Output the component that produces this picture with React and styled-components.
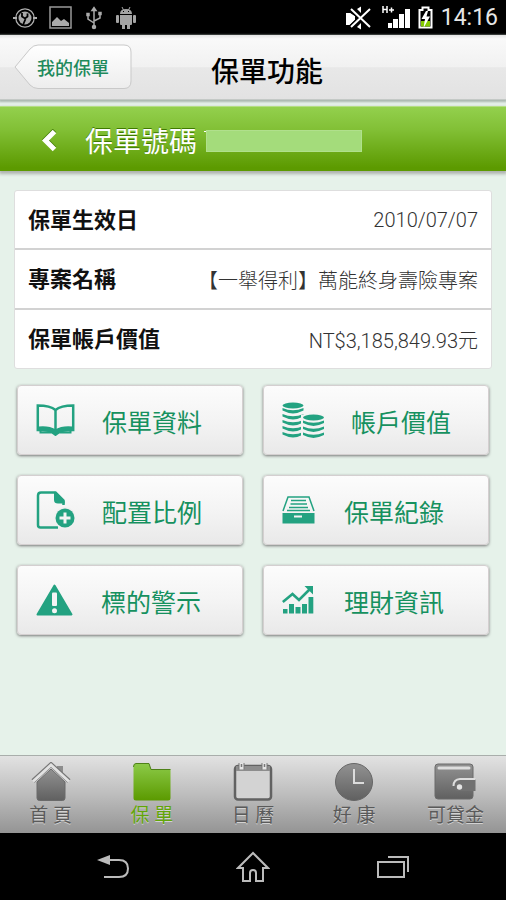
import styled, { createGlobalStyle } from 'styled-components';

const GlobalStyle = createGlobalStyle`
  * {
    box-sizing: border-box;
  }
  body {
    margin: 0;
    background-color: #000;
    font-family: Roboto, 'Noto Sans CJK TC', sans-serif;
  }
  button {
    margin: 0;
    padding: 0;
    border: 0;
    background: none;
    font-family: inherit;
    cursor: pointer;
  }
  svg {
    display: block;
    flex: none;
  }
`;

const Page = styled.div`
  display: flex;
  flex-direction: column;
  min-height: 100vh;
  background-color: #e6f2ea;
`;

// 狀態列
const StatusBar = styled.div`
  display: flex;
  align-items: center;
  justify-content: space-between;
  height: 35px;
  padding: 0 8px 0 13px;
  background-color: #000;
`;

const StatusGroup = styled.div`
  display: flex;
  align-items: center;
  gap: ${({ gap }) => gap}px;
`;

const Clock = styled.span`
  color: #e6e6e6;
  font-size: 23px;
  line-height: 35px;
`;

// 標題列
const Header = styled.header`
  display: grid;
  grid-template-columns: 118px 1fr 104px;
  align-items: center;
  height: 65px;
  padding-left: 14px;
  border-bottom: 1px solid #c4c9c6;
  background: linear-gradient(#e4e4e4, #f9f9f9 6%, #f1f1f1 50%, #e8e8e8 51%, #e2e2e2);
  box-shadow: 0 1px 2px 1px #aab8b0;
`;

const BackButton = styled.button`
  position: relative;
  height: 46px;
  padding: 4px 0 0 23px;
  color: #1f8a5c;
  font-size: 18px;
  font-weight: 500;
  line-height: 42px;
  text-align: left;

  svg {
    position: absolute;
    top: 0;
    left: 0;
  }
  span {
    position: relative;
  }
`;

const PageTitle = styled.h1`
  margin: 0;
  padding-top: 12px;
  color: #000;
  font-size: 28px;
  font-weight: 500;
  line-height: 40px;
  text-align: center;
`;

const PolicyBar = styled.div`
  display: flex;
  align-items: center;
  height: 65px;
  margin-top: 6px;
  padding: 4px 0 0 40px;
  border-top: 1px solid #b4de83;
  background: linear-gradient(#93d04d, #82c036 35%, #5c9a00 95%, #5c9a00);
  box-shadow: 0 2px 3px 1px #aeb3ae;
`;

const PrevButton = styled.button`
  width: 45px;
  height: 40px;
`;

const PolicyTitle = styled.h2`
  margin: 0;
  padding-top: 4px;
  color: #fff;
  font-size: 28px;
  font-weight: 400;
  line-height: 40px;
  text-shadow: 0 -1px 0 #3f7a00;
`;

const Mask = styled.span`
  position: relative;
  width: 156px;
  height: 22px;
  margin-left: 9px;
  border: 1px solid #b0e08c;
  background-color: #a4dc7b;

  &::before {
    content: '';
    position: absolute;
    top: 0;
    left: -3px;
    width: 2px;
    height: 1px;
    background-color: #fff;
  }
`;

const Main = styled.main`
  flex: 1;
  padding: 19px 14px;
`;

// 保單資訊
const InfoList = styled.dl`
  margin: 0;
  border: 1px solid #dedede;
  border-radius: 3px;
  background-color: #fff;
`;

const InfoRow = styled.div`
  display: flex;
  align-items: center;
  justify-content: space-between;
  height: 57px;
  padding: 0 13px;

  & + & {
    height: 60px;
    border-top: 2px solid #d2d2d2;
  }
  dt {
    padding-bottom: 4px;
    color: #111;
    font-size: 22px;
    font-weight: 700;
  }
  dd {
    margin: 0;
    color: #333;
    font-size: 20px;
    font-weight: 300;
  }
`;

// 功能按鈕
const MenuGrid = styled.div`
  display: grid;
  grid-template-columns: 1fr 1fr;
  gap: 20px;
  padding: 16px 3px 0;
`;

const MenuButton = styled.button`
  display: flex;
  align-items: center;
  gap: 27px;
  height: 70px;
  padding-left: 18px;
  border: 1px solid #d4cfd0;
  border-radius: 4px;
  background: linear-gradient(#fcfcfc, #f4f4f4 50%, #e9e9e9);
  box-shadow: 0 1px 3px #777;
  color: #16915f;
  font-size: 25px;
  line-height: 36px;

  span {
    padding-top: 8px;
  }
`;

// 下方選單
const TabBar = styled.nav`
  display: grid;
  grid-template-columns: repeat(5, 1fr);
  height: 78px;
  border-top: 1px solid #a9aeab;
  background: linear-gradient(#e2e2e2, #bdbdbd 50%, #949494);
`;

const Tab = styled.a`
  display: flex;
  flex-direction: column;
  align-items: center;
  padding-top: 6px;
  color: ${({ $active }) => ($active ? '#62a508' : '#5a5a5a')};
  font-size: 19px;
  line-height: 28px;
  text-decoration: none;
  text-shadow: 0 1px 0 #d2d2d2;
`;

const NavBar = styled.div`
  display: grid;
  grid-template-columns: repeat(3, 140px);
  justify-content: center;
  height: 67px;
  background-color: #000;
`;

const NavButton = styled.button`
  display: flex;
  align-items: center;
  justify-content: center;
`;

const GREEN = '#23a281';

const BookIcon = () => (
  <svg width="39" height="32" viewBox="0 0 39 32" fill="none" stroke={GREEN}>
    <path d="M19.500 6C16 3 9 1.500 1.800 1.500V26c6 0 13 .5 17.700 3.500C24 26.500 31 26 37.200 26V1.500C30 1.500 23 3 19.500 6zV29" strokeWidth="2.500" />
    <path d="M1 26H4.500V28.500H16L19.500 31L23 28.500H34.500V26H38" strokeWidth="2" />
    <path d="M3 24.500c7-.8 12 .5 16.500 3C24 25 29 23.700 36 24.500" strokeWidth="4" />
  </svg>
);

const CoinsIcon = () => (
  <svg width="42" height="36" viewBox="0 0 42 36" fill={GREEN}>
    <ellipse cx="11" cy="3.500" rx="10.500" ry="2.900" />
    {[6, 12, 18, 24, 30].map(y => (
      <path key={y} d={`M.5 ${y}q10.500 4.500 21 0v2.600q-10.500 5.600-21 0z`} />
    ))}
    <path d="M19 12.500h23v24H19z" fill="#f3f3f3" />
    <ellipse cx="31.500" cy="15.500" rx="10.500" ry="2.900" />
    {[18.500, 24.500, 30.500].map(y => (
      <path key={y} d={`M21 ${y}q10.500 4.500 21 0v2.600q-10.500 5.600-21 0z`} />
    ))}
  </svg>
);

const FileIcon = () => (
  <svg width="39" height="38" viewBox="0 0 39 38">
    <path d="M27.500 14V9.500L19.500 1.500H5Q2 1.500 2 4.500V34Q2 36.500 4.500 36.500H22" fill="none" stroke={GREEN} strokeWidth="2.500" />
    <path d="M18 .5L28.700 10.500V12.500H22Q18 12.500 18 9z" fill={GREEN} />
    <circle cx="29" cy="27" r="11" fill="#f0f0f0" />
    <circle cx="29" cy="27" r="9.500" fill={GREEN} />
    <path d="M29 21.500V32.500M23.500 27H34.500" stroke="#f4f4f4" strokeWidth="3" />
  </svg>
);

const DrawerIcon = () => (
  <svg width="35" height="28" viewBox="0 0 35 28" fill="none" stroke={GREEN}>
    <path d="M1 15L6 1H27L32 15" strokeWidth="1.500" />
    <path d="M9 4.500H24M8.500 8H25M7 11.500H26M5 14.500H28" strokeWidth="1.700" />
    <path d="M.5 17H32.500V27.500H.5z" fill={GREEN} stroke="none" />
    <path d="M12 20.500H20" stroke="#f4f4f4" strokeWidth="2" />
  </svg>
);

const WarningIcon = () => (
  <svg width="38" height="32" viewBox="0 0 38 32">
    <path d="M18.500 1.500L35.500 30.500H1.500z" fill={GREEN} stroke={GREEN} strokeWidth="2" strokeLinejoin="round" />
    <rect x="16" y="8.500" width="5" height="13.500" rx="1" fill="#f4f4f4" />
    <circle cx="18.500" cy="26.800" r="2.500" fill="#f4f4f4" />
  </svg>
);

const ChartIcon = () => (
  <svg width="35" height="28" viewBox="0 0 35 28">
    <path d="M1 23h4.500v4.500H1zM7 18h5v9.500H7zM13.500 21h5v6.500h-5zM20 18h5v9.500h-5zM26.500 11h4.800v16.500h-4.800z" fill={GREEN} />
    <path d="M.8 16L10.500 8L17 14L27.500 3.500" fill="none" stroke={GREEN} strokeWidth="2.600" />
    <path d="M22.500 0H31V8.500z" fill={GREEN} />
  </svg>
);

const TabDefs = () => (
  <defs>
    <linearGradient id="gray" x1="0" y1="0" x2="0" y2="1">
      <stop offset="0" stopColor="#929292" />
      <stop offset="1" stopColor="#606060" />
    </linearGradient>
    <linearGradient id="green" x1="0" y1="0" x2="0" y2="1">
      <stop offset="0" stopColor="#8cca48" />
      <stop offset="1" stopColor="#5b9a00" />
    </linearGradient>
  </defs>
);

const HomeIcon = () => (
  <svg width="40" height="40" viewBox="0 0 40 40">
    <TabDefs />
    <path d="M26 4H32V15L26 10z" fill="#8d8d8d" />
    <path d="M6 20L20 7L34 20V36Q34 38.500 31.500 38.500H8.500Q6 38.500 6 36z" fill="url(#gray)" stroke="#6a6a6a" />
    <path d="M2 19L20 2.500L38 19" fill="none" stroke="#777" strokeWidth="4.500" />
    <path d="M2 19.500L20 3L38 19.500" fill="none" stroke="#e2e2e2" strokeWidth="3" />
  </svg>
);

const FolderIcon = () => (
  <svg width="40" height="40" viewBox="0 0 40 40">
    <path d="M1.500 5Q1.500 1.500 4 1.500H17L19 7.500H38.500V36Q38.500 38.500 36 38.500H4Q1.500 38.500 1.500 36z" fill="url(#green)" />
    <path d="M1.500 5Q1.500 1.500 4 1.500H17L19 7.500H38.500" fill="none" stroke="#4e8118" />
  </svg>
);

const CalendarIcon = () => (
  <svg width="40" height="40" viewBox="0 0 40 40">
    <rect x="2" y="4" width="36" height="33.500" rx="3" fill="#d3d3d3" stroke="#626262" strokeWidth="2.500" />
    <path d="M3 4H37V9H3z" fill="#8d8d8d" />
    <path d="M8.500 1V7.500M31.500 1V7.500" stroke="#777" strokeWidth="6" />
    <path d="M8.500 1V7.500M31.500 1V7.500" stroke="#e5e5e5" strokeWidth="4" />
    <path d="M8.500 2V5M31.500 2V5" stroke="#777" strokeWidth="1.500" />
  </svg>
);

const ClockIcon = () => (
  <svg width="40" height="40" viewBox="0 0 40 40">
    <circle cx="20" cy="20" r="18.500" fill="url(#gray)" stroke="#666" />
    <path d="M20 7V21H30" fill="none" stroke="#dcdcdc" strokeWidth="2" />
  </svg>
);

const WalletIcon = () => (
  <svg width="42" height="40" viewBox="0 0 42 40">
    <rect x="1" y="2" width="38" height="35" rx="3" fill="url(#gray)" stroke="#6b6b6b" />
    <path d="M5 6H35" stroke="#dedede" strokeWidth="3" strokeLinecap="round" />
    <path d="M41.500 17H26Q19.500 18 19.500 23Q19.500 29 24 29H41.500z" fill="#717171" />
    <path d="M41.500 17H26Q19.500 17.500 19.500 24" fill="none" stroke="#dedede" strokeWidth="2" />
    <circle cx="25.500" cy="25" r="2.700" fill="#e5e5e5" />
  </svg>
);

const StatusIcons = () => (
  <StatusGroup gap={12}>
    <svg width="24" height="22" viewBox="0 0 24 22" fill="none" stroke="#b0b0b0">
      <circle cx="12" cy="11" r="9.200" strokeWidth="1.200" />
      <path d="M0 11H4M20 11H24" strokeWidth="2" />
      <circle cx="12" cy="11" r="6.500" fill="#a8a8a8" stroke="none" />
      <path d="M10 18L12.500 12M9 6V9.500L12 11.500L14.500 9.500V6.500" stroke="#000" strokeWidth="1.800" />
    </svg>
    <svg width="23" height="23" viewBox="0 0 23 23">
      <rect x="1" y="1" width="21" height="21" fill="none" stroke="#999" strokeWidth="1.500" />
      <path d="M3 20V16L8 11L12 15L15 13L20 17V20z" fill="#aaa" />
    </svg>
    <svg width="20" height="24" viewBox="0 0 20 24" fill="none" stroke="#aaa" strokeWidth="1.500">
      <path d="M10 3V20M4 9V13L10 17M16 8V12L10 15" />
      <path d="M8 4.500L10 1.500L12 4.500zM8.500 21a1.500 1.500 0 1 0 3 0a1.500 1.500 0 1 0-3 0z" fill="#aaa" />
      <path d="M3 7.500H5V9.500H3zM15 6.500H17V8.500H15z" fill="#aaa" />
    </svg>
    <svg width="20" height="24" viewBox="0 0 20 24" fill="#a4a4a4">
      <path d="M4 8Q4 3 10 3Q16 3 16 8zM4 9H16V18Q16 19 15 19H5Q4 19 4 18zM6 18H9V23H6zM11 18H14V23H11z" />
      <rect x="0" y="9" width="3" height="8" rx="1" />
      <rect x="17" y="9" width="3" height="8" rx="1" />
      <path d="M6 1L7.500 4M14 1L12.500 4" stroke="#a4a4a4" />
      <path d="M7 5.500H8M12 5.500H13" stroke="#000" />
    </svg>
  </StatusGroup>
);

const SignalIcons = () => (
  <StatusGroup gap={8}>
    <svg width="28" height="26" viewBox="0 0 28 26" fill="#fff">
      <path d="M0 8H4L9 11V15L4 20H0z" />
      <path d="M11 4L15 1.500V8zM11 22L15 24.500V18z" />
      <path d="M5 4L24 22M24 4L5 22" stroke="#000" strokeWidth="5" />
      <path d="M0 8H4L8 12V14L4 19H0z" />
      <path d="M5 4L24 22M24 4L5 22" stroke="#fff" strokeWidth="2" />
    </svg>
    <svg width="28" height="26" viewBox="0 0 28 26" fill="#fff">
      <path d="M6 18h4v5H6zM11 14h5v9h-5zM17 9h5v14h-5zM23 4h5v19h-5z" />
      <path d="M1 1V8M5 1V8M1 4.500H5M7 5H12M9.500 2.500V7.500" stroke="#fff" strokeWidth="1.500" />
    </svg>
    <svg width="15" height="26" viewBox="0 0 15 26">
      <path d="M1.500 5H4.500V2.500H10.500V5H13.500V22.500H1.500z" fill="#000" stroke="#fff" strokeWidth="2" />
      <path d="M3 16H12V21.500H3z" fill="#83c900" />
      <path d="M8 6L3.500 14H7L5.500 23L12 11.500H8.500L10 6z" fill="#fff" />
    </svg>
    <Clock>14:16</Clock>
  </StatusGroup>
);

const infos = [
  { label: '保單生效日', value: '2010/07/07' },
  { label: '專案名稱', value: '【一舉得利】萬能終身壽險專案' },
  { label: '保單帳戶價值', value: 'NT$3,185,849.93元' },
];

const menus = [
  { label: '保單資料', Icon: BookIcon },
  { label: '帳戶價值', Icon: CoinsIcon },
  { label: '配置比例', Icon: FileIcon },
  { label: '保單紀錄', Icon: DrawerIcon },
  { label: '標的警示', Icon: WarningIcon },
  { label: '理財資訊', Icon: ChartIcon },
];

const tabs = [
  { label: '首 頁', Icon: HomeIcon },
  { label: '保 單', Icon: FolderIcon, active: true },
  { label: '日 曆', Icon: CalendarIcon },
  { label: '好 康', Icon: ClockIcon },
  { label: '可貸金', Icon: WalletIcon },
];

export default function App() {
  return (
    <Page>
      <GlobalStyle />
      <StatusBar>
        <StatusIcons />
        <SignalIcons />
      </StatusBar>

      <Header>
        <BackButton type="button">
          <svg width="118" height="46" viewBox="0 0 118 46">
            <defs>
              <linearGradient id="back" x1="0" y1="0" x2="0" y2="1">
                <stop offset="0" stopColor="#fff" />
                <stop offset="1" stopColor="#ededed" />
              </linearGradient>
            </defs>
            <path
              d="M1 23L16 5Q19.500 1 24 1H110Q117 1 117 8V37Q117 44.500 110 44.500H24Q19.500 44.500 16 41z"
              fill="url(#back)"
              stroke="#c9c9c9"
            />
          </svg>
          <span>我的保單</span>
        </BackButton>
        <PageTitle>保單功能</PageTitle>
      </Header>

      <PolicyBar>
        <PrevButton type="button" aria-label="prev">
          <svg width="20" height="24" viewBox="0 0 20 24" fill="none">
            <path d="M14.500 1.500L5.500 10.500L14.500 19.500" stroke="#3f7a00" strokeWidth="5" />
            <path d="M14.500 2.500L5.500 11.500L14.500 20.500" stroke="#fff" strokeWidth="5" />
          </svg>
        </PrevButton>
        <PolicyTitle>保單號碼</PolicyTitle>
        <Mask />
      </PolicyBar>

      <Main>
        <InfoList>
          {infos.map(({ label, value }) => (
            <InfoRow key={label}>
              <dt>{label}</dt>
              <dd>{value}</dd>
            </InfoRow>
          ))}
        </InfoList>
        <MenuGrid>
          {menus.map(({ label, Icon }) => (
            <MenuButton key={label} type="button">
              <Icon />
              <span>{label}</span>
            </MenuButton>
          ))}
        </MenuGrid>
      </Main>

      <TabBar>
        {tabs.map(({ label, Icon, active }) => (
          <Tab key={label} href="#" $active={active}>
            <Icon />
            {label}
          </Tab>
        ))}
      </TabBar>

      <NavBar>
        <NavButton type="button" aria-label="back">
          <svg width="34" height="26" viewBox="0 0 34 26" fill="none" stroke="#bbb" strokeWidth="2">
            <path d="M12 6H23Q32 6 32 14.500Q32 23 23 23H8" />
            <path d="M1 6L14 1V11z" fill="#bbb" stroke="none" />
          </svg>
        </NavButton>
        <NavButton type="button" aria-label="home">
          <svg width="34" height="32" viewBox="0 0 34 32" fill="none" stroke="#bbb" strokeWidth="2">
            <path d="M17 2L2 17H7V30H14V22Q14 19 17 19Q20 19 20 22V30H27V17H32z" />
          </svg>
        </NavButton>
        <NavButton type="button" aria-label="recent">
          <svg width="34" height="24" viewBox="0 0 34 24" fill="none" stroke="#bbb" strokeWidth="2">
            <path d="M2 7H28V22H2zM12 2H32V17" />
          </svg>
        </NavButton>
      </NavBar>
    </Page>
  );
}
